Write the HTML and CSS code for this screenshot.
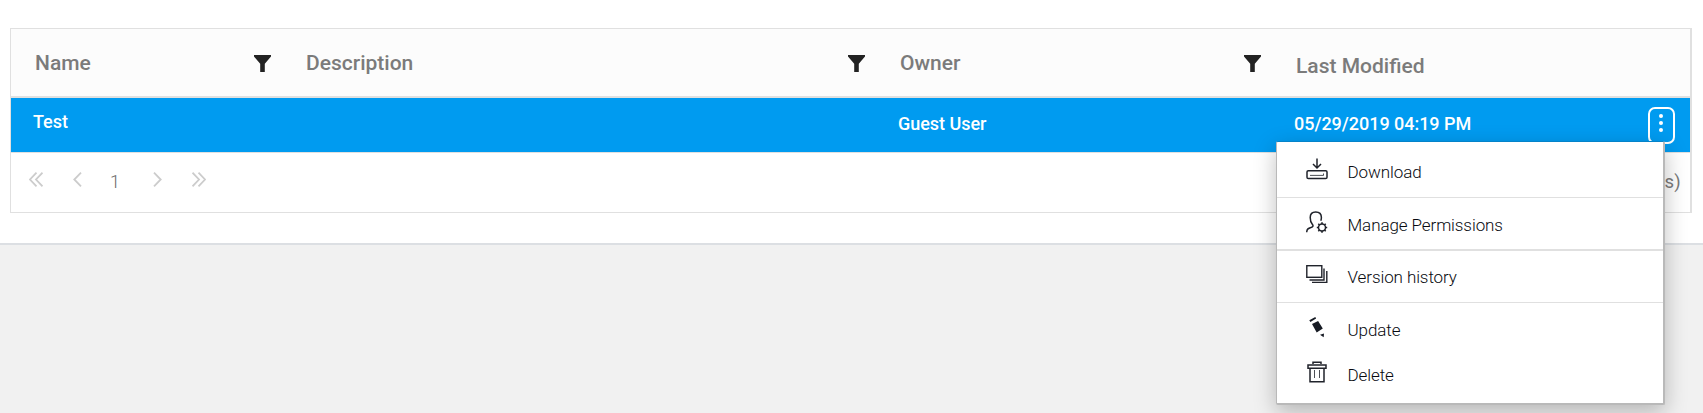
FILE: index.html
```html
<!DOCTYPE html>
<html lang="en">
<head>
<meta charset="utf-8">
<title>Files</title>
<link rel="stylesheet" href="styles.css">
</head>
<body>
<main class="panel">
  <div class="grid">
    <div class="grid-head">
      <div class="col col-name"><span>Name</span><svg class="filter" viewBox="0 0 17 17"><path d="M0 0H17V1.6L10.8 8.8V17H6.2V8.8L0 1.6Z"/></svg></div>
      <div class="col col-desc"><span>Description</span><svg class="filter" viewBox="0 0 17 17"><path d="M0 0H17V1.6L10.8 8.8V17H6.2V8.8L0 1.6Z"/></svg></div>
      <div class="col col-owner"><span>Owner</span><svg class="filter" viewBox="0 0 17 17"><path d="M0 0H17V1.6L10.8 8.8V17H6.2V8.8L0 1.6Z"/></svg></div>
      <div class="col col-date"><span>Last Modified</span></div>
    </div>
    <div class="grid-row">
      <div class="col col-name">Test</div>
      <div class="col col-desc"></div>
      <div class="col col-owner">Guest User</div>
      <div class="col col-date">05/29/2019 04:19 PM</div>
      <button class="more" aria-label="More"><i></i><i></i><i></i></button>
    </div>
    <div class="pager">
      <svg class="double" viewBox="0 0 14 15"><path d="M7.5 .7L1 7.5L7.5 14.3M13.5 .7L7 7.5L13.5 14.3"/></svg>
      <svg class="single prev" viewBox="0 0 9 15"><path d="M8 .7L1.3 7.5L8 14.3"/></svg>
      <span class="page">1</span>
      <svg class="single next" viewBox="0 0 9 15"><path d="M1 .7L7.7 7.5L1 14.3"/></svg>
      <svg class="double last" viewBox="0 0 14 15"><path d="M.5 .7L7 7.5L.5 14.3M6.5 .7L13 7.5L6.5 14.3"/></svg>
      <span class="count">1 of 1 pages (1 items)</span>
    </div>
  </div>
</main>
<div class="menu">
  <div class="item download">
    <svg viewBox="0 0 22 22"><path d="M11 .5V9.5M7 6L11 10L15 6" stroke-width="1.5"/><rect x="1" y="12.8" width="20" height="7.8" rx="1.3" stroke-width="1.5"/><path d="M4 17.4H17.5V15.5" stroke-width=".8"/></svg>
    <span>Download</span>
  </div>
  <div class="item permissions">
    <svg viewBox="0 0 22 22"><path d="M.7 21.3C.9 18 2 17.6 4.3 16.7C7 15.9 7.7 15 6.3 13.2C4.9 11.5 4.2 9 4.2 6.5C4.2 3 6 1 9.7 1C13.2 1 15.4 3.3 15.4 6.6C15.4 7.8 15.2 8.8 14.8 9.8" stroke-width="1.5"/><circle cx="16" cy="16.5" r="3.5" stroke-width="1.5"/><path d="M16 11.3V13M16 20V21.7M10.800 16.5H12.5M19.5 16.5H21.2M12.3 12.8L13.5 14M18.5 19L19.7 20.2M12.3 20.2L13.5 19M18.5 14L19.7 12.8" stroke-width="1.6"/></svg>
    <span>Manage Permissions</span>
  </div>
  <div class="item history">
    <svg viewBox="0 0 22 22"><rect x=".8" y="2.7" width="15" height="11.6" stroke-width="1.4"/><path d="M18 5.500V17H3.500M20.8 8V19.400H6" stroke-width="1.4"/></svg>
    <span>Version history</span>
  </div>
  <div class="item update">
    <svg viewBox="0 0 22 22"><path class="solid" d="M3.300 4.300L9.300 1L10.100 2.600L4.400 5.900ZM6 8.100L12.100 4.900L16.800 12.500L10.700 16.400ZM14 18.800L18 17.500L17.700 21.300Z"/></svg>
    <span>Update</span>
  </div>
  <div class="item delete">
    <svg viewBox="0 0 22 22"><path d="M7 3V1.200H15V3M2 4H20V7.200H2ZM4 7.500V20.800H18V7.500" stroke-width="1.500"/><path d="M8.500 9V17M13.500 9V17" stroke-width=".8"/></svg>
    <span>Delete</span>
  </div>
</div>
</body>
</html>
```
FILE: styles.css
```css
* { box-sizing: border-box; }
body {
  margin: 0;
  height: 413px;
  overflow: hidden;
  background: #f1f1f1;
  font-family: Roboto, sans-serif;
}
.panel {
  height: 245px;
  padding: 28px 11px 0 10px;
  background: #fff;
  border-bottom: 2px solid #dcdfe3;
}
.grid {
  height: 185px;
  border: 1px solid #e0e0e0;
  border-right-width: 2px;
}
.grid-head {
  display: flex;
  height: 69px;
  background: #fcfcfc;
  border-bottom: 2px solid #e0e0e0;
  color: #7b7b7b;
  font-size: 21px;
  font-weight: 500;
}
.col {
  flex: none;
  display: flex;
  justify-content: space-between;
}
.grid-head .col { padding: 21px 11px 0 24px; line-height: 26px; }
.col-name { width: 271px; }
.col-desc { width: 594px; }
.col-owner { width: 396px; }
.grid-head .col-date { padding-top: 24px; }
.filter {
  width: 17px;
  height: 17px;
  margin-top: 5px;
  fill: #222;
}
.grid-row {
  display: flex;
  height: 54px;
  background: #009bf0;
  color: #fff;
  font-size: 18px;
  font-weight: 500;
}
.grid-row .col { padding: 14px 0 0 22px; line-height: 24px; letter-spacing: -.03px; }
.grid-row .col-name { padding-top: 12px; }
.more {
  display: flex;
  flex-direction: column;
  align-items: center;
  gap: 3px;
  width: 27px;
  height: 37px;
  margin: 9px 15px 0 auto;
  padding: 5px 1px 0 0;
  border: 2px solid #fff;
  border-radius: 7px;
  background: transparent;
}
.more i {
  width: 4px;
  height: 4px;
  border-radius: 50%;
  background: #fff;
}
.pager {
  display: flex;
  height: 60px;
  padding: 19px 9px 0 18px;
  border-top: 1px solid #e0e0e0;
  color: #6b6b6b;
  font-size: 18px;
  font-weight: 300;
}
.pager svg {
  flex: none;
  height: 15px;
  fill: none;
  stroke: #ccc;
  stroke-width: 1.8;
}
.double { width: 14px; }
.single { width: 9px; }
.prev { margin-left: 30px; }
.page { width: 12px; margin-left: 28px; line-height: 20px; }
.next { margin-left: 31px; }
.last { margin-left: 30px; }
.count {
  margin-left: auto;
  line-height: 20px;
  font-size: 18.5px;
  font-weight: 400;
  letter-spacing: .3px;
  color: #7b7b7b;
}
.menu {
  position: absolute;
  left: 1276px;
  top: 141px;
  width: 389px;
  height: 264px;
  border: solid #b9b9b9;
  border-width: 0 2px 2px 1px;
  border-top: 1px solid #0583c9;
  border-radius: 2px;
  background: #fff;
  box-shadow: 0 7px 22px rgba(0, 0, 0, .25);
  color: #080a10;
  font-size: 17px;
  font-weight: 300;
  letter-spacing: -.09px;
}
.item {
  display: flex;
  gap: 19.5px;
  height: 45px;
  padding-left: 29px;
  line-height: 22px;
}
.item svg {
  flex: none;
  width: 22px;
  height: 22px;
  fill: none;
  stroke: #20232b;
}
.item .solid { fill: #171b24; stroke: none; }
.item span { padding-top: 3px; }
.download { height: 56px; padding-top: 16px; border-bottom: 1px solid #e0e0e0; }
.permissions { height: 53px; padding-top: 13px; border-bottom: 2px solid #e0e0e0; }
.history { height: 52px; padding-top: 12px; border-bottom: 1px solid #e0e0e0; }
.update { padding-top: 13px; }
.delete { padding-top: 13px; }
```
